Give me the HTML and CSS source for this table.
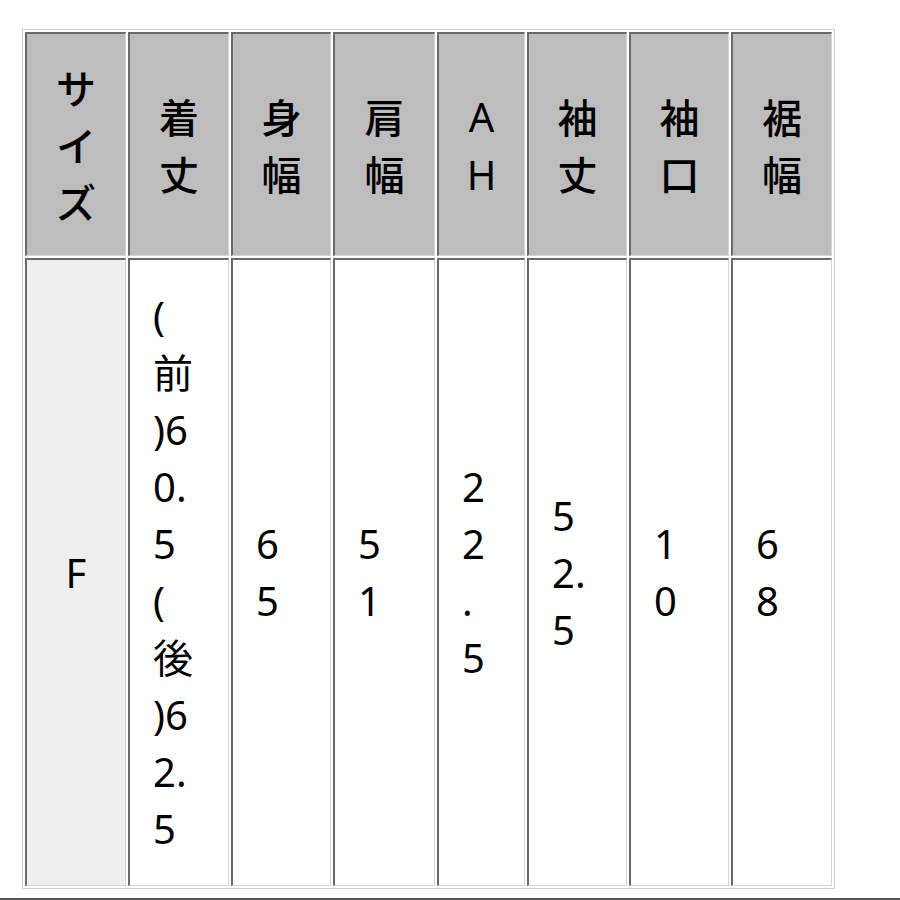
FILE: index.html
```html
<!DOCTYPE html>
<html lang="ja">
<head>
<meta charset="utf-8">
<title>サイズ表</title>
<link rel="stylesheet" href="styles.css">
</head>
<body>
<table class="size-table">
  <thead>
    <tr>
      <th class="c-size">サイズ</th>
      <th class="c-std">着丈</th>
      <th class="c-narrow">身幅</th>
      <th class="c-wide">肩幅</th>
      <th class="c-ah"><span class="latin">A H</span></th>
      <th class="c-narrow">袖丈</th>
      <th class="c-narrow">袖口</th>
      <th class="c-std">裾幅</th>
    </tr>
  </thead>
  <tbody>
    <tr>
      <th class="row-head">F</th>
      <td>(前)60.5(後)62.5</td>
      <td>65</td>
      <td>51</td>
      <td>22.5</td>
      <td>52.5</td>
      <td>10</td>
      <td>68</td>
    </tr>
  </tbody>
</table>
<div class="page-rule"></div>
</body>
</html>
```

FILE: styles.css
```css
html, body {
  margin: 0;
  padding: 0;
  background: #ffffff;
}

body {
  font-family: "Noto Sans", "Noto Sans CJK JP", sans-serif;
  color: #000000;
}

.size-table {
  margin: 29px 0 0 22px;
  border-collapse: separate;
  border-spacing: 2px;
  border: 1px solid #cfcfcf;
  table-layout: fixed;
}

.size-table th,
.size-table td {
  box-sizing: border-box;
  border-style: solid;
  border-width: 2px 1px 1px 2px;
  border-color: #6a6a6a #d4d4d4 #d4d4d4 #6a6a6a;
  font-size: 40px;
  line-height: 57px;
  vertical-align: middle;
}

.size-table thead th {
  background: #bdbdbd;
  font-family: "Noto Sans CJK JP", sans-serif;
  font-weight: 500;
  text-align: center;
  padding: 25px 20px 25px;
  height: 224px;
}

.size-table .latin {
  font-family: "Noto Sans", "Noto Sans CJK JP", sans-serif;
  font-weight: 400;
}

.c-size { width: 101px; }
.c-std { width: 101px; }
.c-narrow { width: 100px; }
.c-wide { width: 102px; }
.c-ah { width: 88px; }

.size-table tbody th.row-head {
  background: #efefef;
  font-weight: 400;
  text-align: center;
  padding: 27px 20px 28px;
}

.size-table tbody td {
  background: #ffffff;
  text-align: left;
  padding: 27px 32px 28px 23px;
  word-break: break-all;
  overflow-wrap: anywhere;
}

.page-rule {
  margin-top: 9px;
  border-top: 2px solid #555555;
}
```
